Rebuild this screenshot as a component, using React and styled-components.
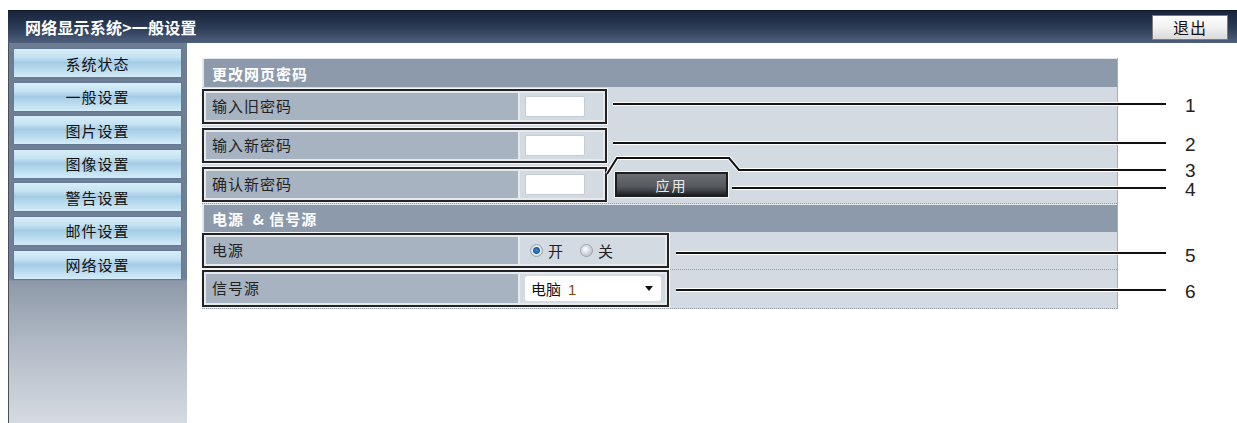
import React from 'react';
import styled, { createGlobalStyle } from 'styled-components';

const GlobalStyle = createGlobalStyle`
  html, body {
    margin: 0;
    background: #fff;
    overflow: hidden;
  }
  body {
    padding: 10px 0 0 8px;
    font-family: "Noto Sans CJK SC", "Liberation Sans", sans-serif;
  }
`;

const Page = styled.div`
  position: relative;
  width: 1229px;
  height: 413px;
`;

const Header = styled.div`
  height: 33px;
  display: flex;
  align-items: center;
  justify-content: space-between;
  padding: 0 9px 0 17px;
  background: linear-gradient(to bottom, #18253d 0%, #2b3a55 50%, #4e607c 100%);
  border-top: 1px solid #0e1628;
  box-sizing: border-box;
`;

const Title = styled.div`
  color: #fff;
  font-size: 16px;
  font-weight: 700;
  letter-spacing: 0.2px;
`;

const ExitButton = styled.button`
  width: 76px;
  height: 25px;
  border: 1px solid #7c7c7c;
  background: linear-gradient(to bottom, #ffffff 0%, #f1f1f1 50%, #d9d9d9 100%);
  font-family: inherit;
  font-size: 16px;
  letter-spacing: 1px;
  color: #111;
  padding: 0;
  line-height: 22px;
`;

const Body = styled.div`
  display: flex;
  height: 380px;
`;

const Sidebar = styled.div`
  width: 179px;
  box-sizing: border-box;
  border-left: 1px solid #4b4f57;
  padding: 5px 0 0 4px;
  display: flex;
  flex-direction: column;
  gap: 3.6px;
  background: linear-gradient(
    to bottom,
    #6c7d94 0px,
    #6f8098 236px,
    #8e99a9 238px,
    #b0b9c5 300px,
    #d6dbe2 380px
  );
`;

const NavButton = styled.div`
  width: 169px;
  height: 30px;
  box-sizing: border-box;
  border: 1px solid #637a96;
  background: linear-gradient(
    to bottom,
    #d9eef8 0%,
    #c3e2f2 30%,
    #a4cbe5 48%,
    #b7daee 70%,
    #d3ecf8 100%
  );
  display: flex;
  align-items: center;
  justify-content: center;
  font-size: 15px;
  letter-spacing: 1px;
  color: #111;
`;

const Main = styled.div`
  flex: 1;
  padding: 15px 0 0 15px;
`;

const Panel = styled.div`
  width: 916px;
  background: #d3dae1;
  border-right: 1px solid #a4afbc;
  box-sizing: border-box;
`;

const SectionHeader = styled.div`
  height: ${p => p.$h}px;
  box-sizing: border-box;
  background: #8d9aab;
  border-top: 1px solid #e3e8ed;
  border-left: 2px solid #e3e8ed;
  display: flex;
  align-items: center;
  padding-left: 8px;
  color: #fff;
  font-size: 15px;
  font-weight: 700;
  letter-spacing: 1px;
  white-space: pre;
`;

const Row = styled.div`
  height: ${p => p.$h}px;
  box-sizing: border-box;
  display: flex;
  align-items: flex-end;
  padding-bottom: 1px;
  border-bottom: 1px dotted ${p => (p.$dotted ? '#8f99a6' : 'transparent')};
`;

const Box = styled.div`
  width: ${p => p.$w}px;
  height: ${p => p.$boxH}px;
  box-sizing: border-box;
  border: 2px solid #232323;
  box-shadow: 0 0 0 1px #f4f6f8;
  background: #e6eaee;
  padding: 2px;
  display: flex;
  gap: 2px;
`;

const LabelCell = styled.div`
  width: 312px;
  background: #a8b3c1;
  display: flex;
  align-items: center;
  padding: 0 0 2px 6px;
  font-size: 15px;
  letter-spacing: 1px;
  color: #222;
  box-sizing: border-box;
`;

const ValueCell = styled.div`
  flex: 1;
  background: #d3dae1;
  display: flex;
  align-items: center;
  padding-left: ${p => p.$pl || 5}px;
  gap: 5px;
  font-size: 15px;
  color: #222;
`;

const PassInput = styled.div`
  width: 60px;
  height: 21px;
  background: #fff;
  border: 1px solid #c5ccd4;
  border-radius: 2px;
  box-sizing: border-box;
`;

const Gap = styled.div`
  width: ${p => p.$w}px;
`;

const ApplyButton = styled.div`
  width: 113px;
  height: 25px;
  box-sizing: border-box;
  border: 2px solid #1e1e1e;
  box-shadow: 0 0 0 1px #f4f6f8;
  background: linear-gradient(to bottom, #6a6e74 0%, #55595e 60%, #3d4044 80%, #1f2123 100%);
  display: flex;
  align-items: center;
  justify-content: center;
  color: #e8eaec;
  font-size: 14px;
  letter-spacing: 2px;
  margin-bottom: 5px;
  align-self: flex-end;
`;

const Radio = styled.span`
  width: 13px;
  height: 13px;
  border-radius: 50%;
  box-sizing: border-box;
  border: 1px solid #9aa3ad;
  background: ${p =>
    p.$on
      ? 'radial-gradient(circle, #3a8fd0 0, #1d5f9e 3px, #e9eef2 4px, #c9d1d9 6px)'
      : 'radial-gradient(circle at 40% 40%, #ffffff 0, #e3e7eb 3px, #c3cad2 6px)'};
  display: inline-block;
  margin-left: ${p => p.$ml || 0}px;
`;

const Select = styled.div`
  width: 136px;
  height: 25px;
  background: #fff;
  border-radius: 3px;
  box-sizing: border-box;
  display: flex;
  align-items: center;
  justify-content: space-between;
  padding: 0 8px 0 6px;
  font-size: 15px;
  color: #111;
`;

const Num = styled.span`
  color: #7a4b12;
  font-family: "Liberation Sans", sans-serif;
  margin-left: 7px;
`;

const Arrow = styled.span`
  width: 0;
  height: 0;
  border-left: 4px solid transparent;
  border-right: 4px solid transparent;
  border-top: 5px solid #111;
`;

const Callouts = styled.svg`
  position: absolute;
  left: -8px;
  top: -10px;
  pointer-events: none;
`;

const lines = [
  'M613 104 H1166',
  'M613 143 H1166',
  'M607 174 L617 158 H729 L739 170 H1166',
  'M732 188 H1166',
  'M676 253 H1166',
  'M676 290 H1166',
];

const labels = [
  ['1', 112],
  ['2', 151],
  ['3', 177],
  ['4', 196],
  ['5', 262],
  ['6', 298],
];

const navItems = ['系统状态', '一般设置', '图片设置', '图像设置', '警告设置', '邮件设置', '网络设置'];

const PasswordRow = ({ label, dotted, children }) => (
  <Row $h={39} $dotted={dotted}>
    <Box $w={405} $boxH={35}>
      <LabelCell>{label}</LabelCell>
      <ValueCell>
        <PassInput />
      </ValueCell>
    </Box>
    {children}
  </Row>
);

const App = () => (
  <>
    <GlobalStyle />
    <Page>
      <Header>
        <Title>网络显示系统&gt;一般设置</Title>
        <ExitButton>退出</ExitButton>
      </Header>
      <Body>
        <Sidebar>
          {navItems.map(item => (
            <NavButton key={item}>{item}</NavButton>
          ))}
        </Sidebar>
        <Main>
          <Panel>
            <SectionHeader $h={29}>更改网页密码</SectionHeader>
            <PasswordRow label="输入旧密码" />
            <PasswordRow label="输入新密码" />
            <PasswordRow label="确认新密码" dotted>
              <Gap $w={8} />
              <ApplyButton>应用</ApplyButton>
            </PasswordRow>
            <SectionHeader $h={28}>电源  &amp; 信号源</SectionHeader>
            <Row $h={38} $dotted>
              <Box $w={467} $boxH={35}>
                <LabelCell>电源</LabelCell>
                <ValueCell $pl={10}>
                  <Radio $on />
                  <span>开</span>
                  <Radio $ml={12} />
                  <span>关</span>
                </ValueCell>
              </Box>
            </Row>
            <Row $h={39} $dotted>
              <Box $w={467} $boxH={37}>
                <LabelCell>信号源</LabelCell>
                <ValueCell $pl={5}>
                  <Select>
                    <span>
                      电脑<Num>1</Num>
                    </span>
                    <Arrow />
                  </Select>
                </ValueCell>
              </Box>
            </Row>
          </Panel>
        </Main>
      </Body>
      <Callouts width="1237" height="423" viewBox="0 0 1237 423">
        {lines.map(d => (
          <g key={d} fill="none">
            <path d={d} stroke="#fff" strokeWidth="4" />
            <path d={d} stroke="#111" strokeWidth="2" />
          </g>
        ))}
        {labels.map(([t, y]) => (
          <text
            key={t}
            x="1185"
            y={y}
            fontFamily="Liberation Sans, sans-serif"
            fontSize="19"
            fill="#222"
          >
            {t}
          </text>
        ))}
      </Callouts>
    </Page>
  </>
);

export default App;
